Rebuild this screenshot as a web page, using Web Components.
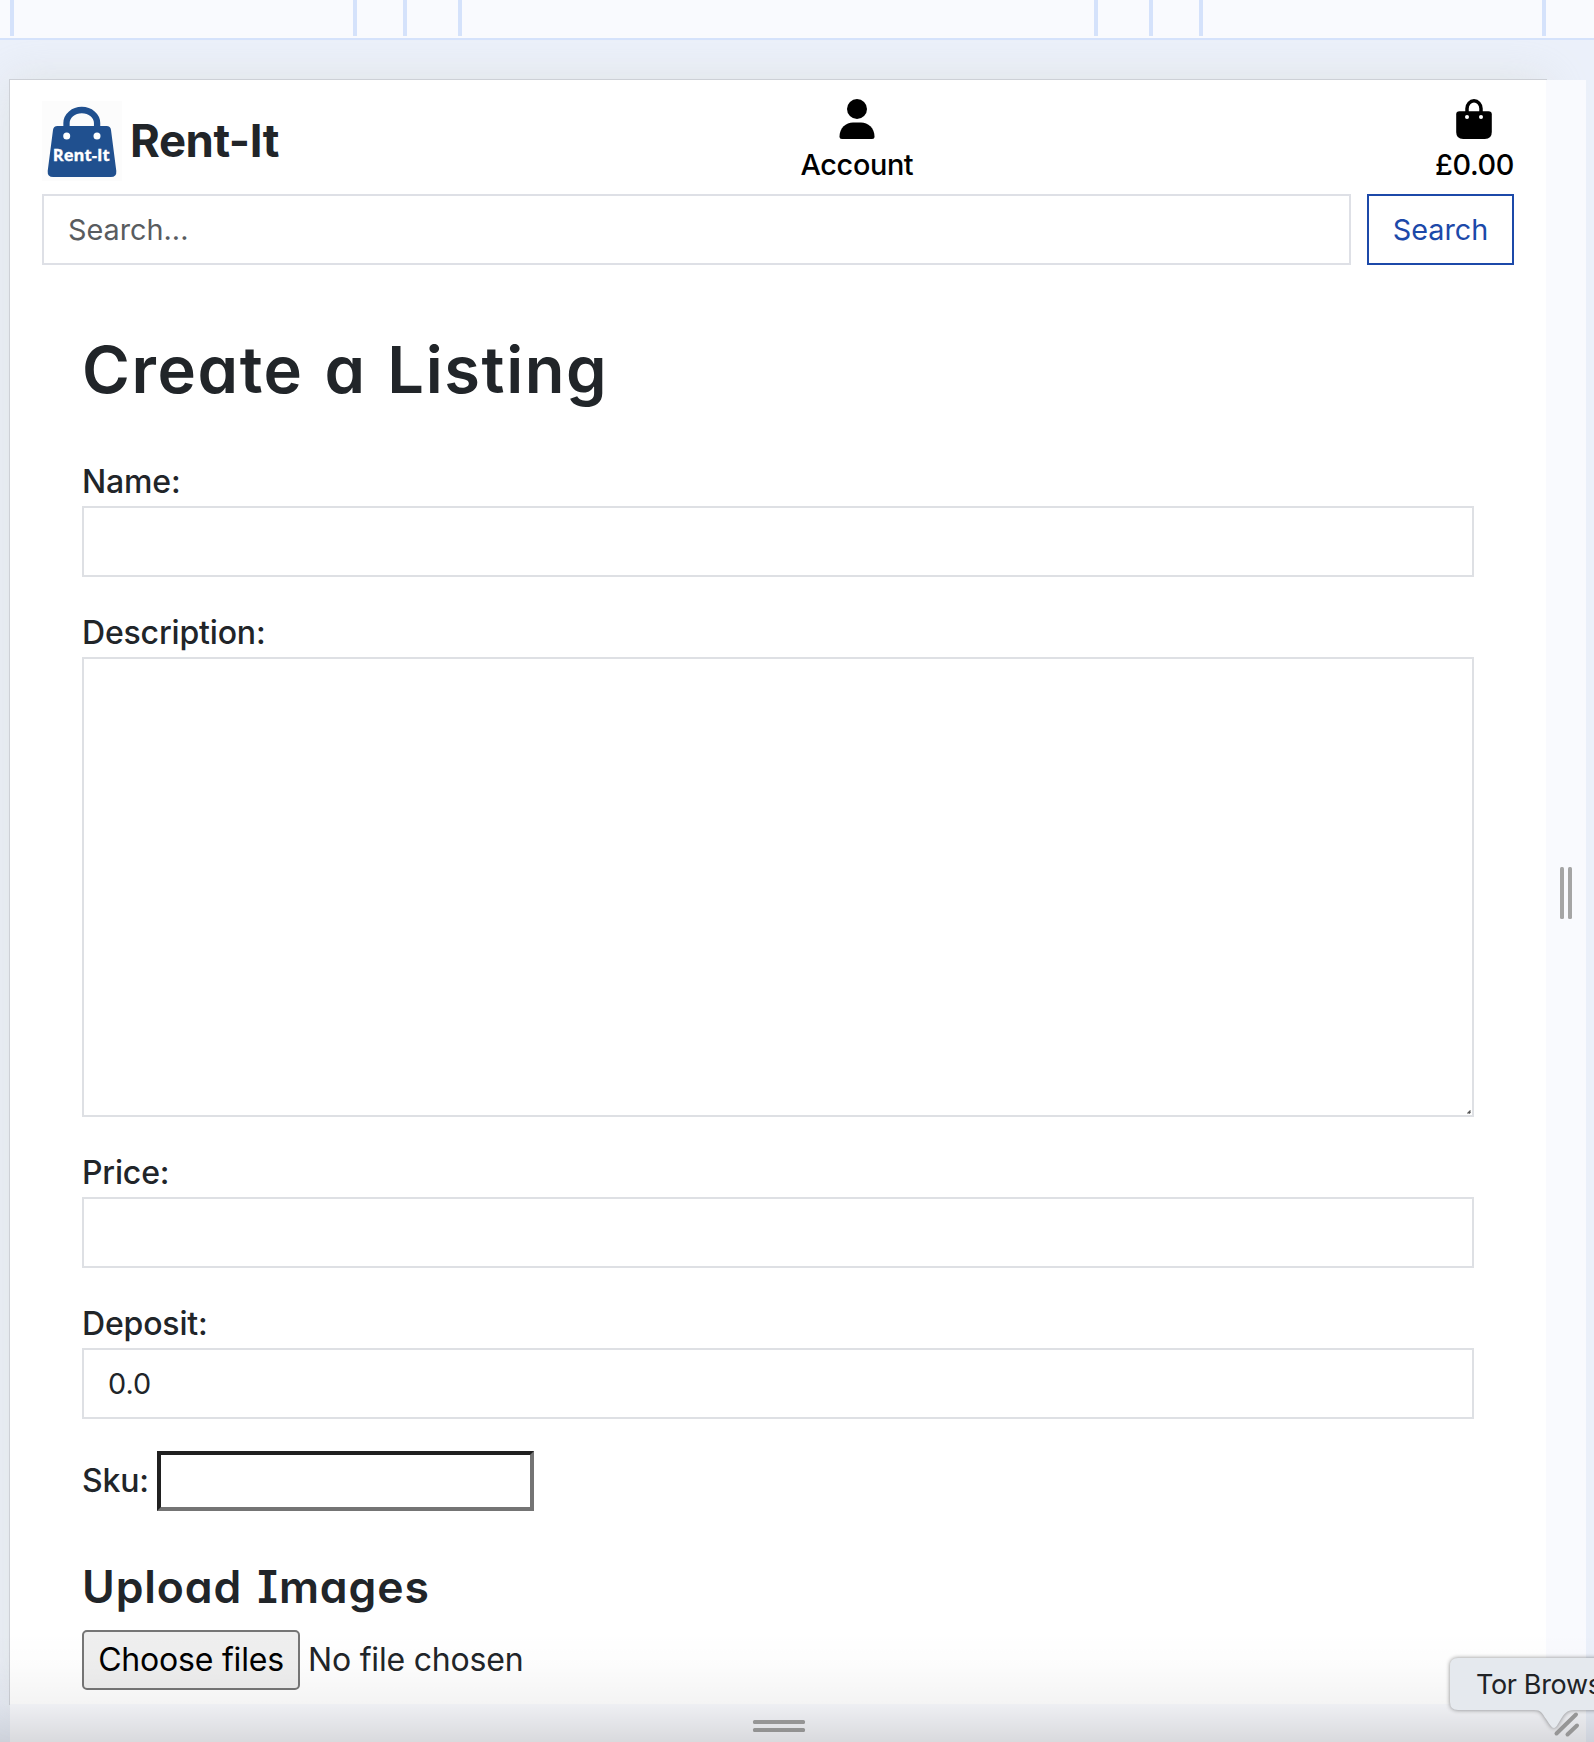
<!DOCTYPE html>
<html lang="en">
<head>
<meta charset="utf-8">
<title>Rent-It - Create a Listing</title>
<style>
html,body{margin:0;height:1742px;width:1594px;overflow:hidden;background:#ebf0fa;font-family:Inter,"Liberation Sans",sans-serif;color:#212529}
</style>
</head>
<body>
<rent-stage></rent-stage>
<script>
const define=(name,html)=>customElements.define(name,class extends HTMLElement{
  constructor(){super();this.attachShadow({mode:'open'}).innerHTML=html;}
});

define('media-ruler',`<style>
:host{display:flex;box-sizing:border-box;height:40px;padding-left:10px;background:#f9fafe;border-bottom:2px solid #d5e2fb}
i{display:block;box-sizing:border-box;height:36px;border-left:4px solid #d5e2fb;flex:none}
</style><i style="width:343px"></i><i style="width:50px"></i><i style="width:55px"></i><i style="width:636px"></i><i style="width:55px"></i><i style="width:50px"></i><i style="width:343px"></i><i style="width:4px"></i>`);

define('brand-logo',`<style>
:host{display:flex;align-items:center;height:80px}
svg{display:block;width:80px;height:80px;flex:none}
b{font-size:45.500px;font-weight:700;line-height:54px;margin-left:8px;letter-spacing:-.45px;white-space:nowrap}
text{font:700 16.500px "Open Sans","Noto Sans",sans-serif}
</style><svg viewBox="0 0 80 80"><rect width="80" height="80" fill="#fcfcfc"/>
<path d="M24.500 27V22a15.300 13 0 0 1 30.600 0v5" fill="none" stroke="#20508f" stroke-width="6.300"/>
<path d="M15.500 25h49q4 0 4.500 4l5.300 41q.5 6-5.500 6H11.200q-6 0-5.500-6L11 29q.5-4 4.500-4z" fill="#20508f"/>
<circle cx="24.700" cy="35" r="3.500" fill="#fff"/><circle cx="55" cy="35" r="3.500" fill="#fff"/>
<text x="10.800" y="59.500" textLength="57" lengthAdjust="spacingAndGlyphs" fill="#fff" stroke="#fff" stroke-width=".3">Rent-It</text></svg><b>Rent-It</b>`);

define('nav-item',`<style>
:host{display:flex;flex-direction:column;align-items:center;color:#000;font-size:28.800px;font-weight:500;line-height:44px;height:91px;white-space:nowrap;letter-spacing:-.35px}
::slotted(svg){display:block;width:40px;height:40px;margin-bottom:4px}
</style><slot name="icon"></slot><span><slot></slot></span>`);

define('site-header',`<style>
:host{display:block;padding:19px 32px 0}
.top{display:flex;justify-content:space-between;height:95px}
brand-logo{margin-top:2px}
.search{display:flex;gap:16px}
.box,.btn{box-sizing:border-box;height:71px;border:2px solid #dee0e6;font-size:28.800px;line-height:67px;white-space:nowrap}
.box{flex:1;padding-left:24px;color:#595c5f}
.btn{width:147px;border-color:#1c49a9;color:#1c49a9;text-align:center;background:#fff}
</style><div class="top"><brand-logo></brand-logo>
<nav-item class="acc"><svg slot="icon" viewBox="0 0 40 40"><circle cx="20" cy="10" r="10"/><path d="M2.500 37.500C2.500 29 9 23.500 16 23.500h8c7 0 13.500 5.500 13.500 14q0 2.500-2.500 2.500H5q-2.500 0-2.500-2.500z"/></svg>Account</nav-item>
<nav-item><svg slot="icon" viewBox="0 0 40 40"><path d="M13 15V9.500a7 7.700 0 0 1 14 0V15" fill="none" stroke="#000" stroke-width="3.500"/><path d="M5.500 12.300h29q3.300 0 3.300 3.300V33q0 7-7 7H9.200q-7 0-7-7V15.600q0-3.300 3.300-3.300z"/><circle cx="13" cy="18" r="2" fill="#fff"/><circle cx="27" cy="18" r="2" fill="#fff"/></svg>£0.00</nav-item></div>
<div class="search"><div class="box">Search...</div><div class="btn">Search</div></div>`);

define('form-field',`<style>
:host{display:block;margin-bottom:32px}
label{display:block;font-size:32px;font-weight:500;line-height:48px;letter-spacing:-.17px}
.input{position:relative;box-sizing:border-box;height:var(--field-height,71px);border:2px solid #dee0e4;padding-left:24px;font-size:28.800px;line-height:67px}
.grip{display:none;position:absolute;right:1px;bottom:1px}
:host([multiline]) .grip{display:block}
</style><label><slot name="label"></slot></label><div class="input"><slot></slot><svg class="grip" width="4" height="4" viewBox="0 0 4 4"><path d="M.5 3.500 3.500.5M2 3.500 3.500 2" stroke="#555" stroke-width="1.200"/></svg></div>`);

define('listing-form',`<style>
:host{display:block;padding:66px 72px 0}
h1,h2{margin:0;font-feature-settings:"cv11" 1,"cv08" 1;font-weight:600;white-space:nowrap}
h1{font-size:65px;line-height:78px;margin-bottom:49px;letter-spacing:1.600px;word-spacing:2.800px}
h2{font-size:44.500px;line-height:54px;margin:49px 0 16px;letter-spacing:.9px;word-spacing:3px}
.tall{--field-height:460px}
.sku{display:flex;align-items:center;font-size:32px;font-weight:500;height:60px;line-height:58px;letter-spacing:-.17px}
.sku span{width:75px}
.sku div{box-sizing:border-box;width:377px;height:60px;border:4px solid;border-color:#202020 #747474 #747474 #202020}
.files{display:flex;align-items:center;font-size:32px;line-height:56px;gap:8px;white-space:nowrap;letter-spacing:-.2px}
.files b{box-sizing:border-box;width:218px;height:60px;text-align:center;font-weight:400;color:#000;background:#efefef;border:2px solid #767676;border-radius:5px}
</style><h1>Create a Listing</h1>
<form-field><span slot="label">Name:</span></form-field>
<form-field class="tall" multiline><span slot="label">Description:</span></form-field>
<form-field><span slot="label">Price:</span></form-field>
<form-field><span slot="label">Deposit:</span>0.0</form-field>
<div class="sku"><span>Sku:</span><div></div></div>
<h2>Upload Images</h2>
<div class="files"><b>Choose files</b><span>No file chosen</span></div>`);

define('resize-handle',`<style>
:host{display:flex;align-items:center;justify-content:center;gap:4px;padding-top:2px;background:#f9fafe}
:host([horizontal]){flex-direction:column;padding:6px 0 0 2px}
i{width:4px;height:52px;border-radius:1.500px;background:#a5a5a5}
:host([horizontal]) i{width:52px;height:4px;background:#a3a3a3}
</style><i></i><i></i>`);

define('dock-tooltip',`<style>
:host{position:absolute;left:1450px;top:1657px;width:144px;height:85px;overflow:visible}
svg{position:absolute;left:-10px;top:-10px;filter:drop-shadow(0 0 2px rgba(0,0,0,.45))}
span{position:absolute;left:26px;top:10px;font-size:27px;line-height:36px;color:#202326;white-space:nowrap;letter-spacing:-.35px}
</style><svg width="174" height="95" viewBox="-10 -10 174 95"><path d="M8 1H164V53H124C117 53 114 57 111 62 108 67 106 71 104 71 102 71 100 68 96 62 92 56 91 53 84 53H8Q0 53 0 45V9Q0 1 8 1Z" fill="#e5e9ee"/></svg><span>Tor Browser</span>`);

define('rent-stage',`<style>
:host{display:block;position:relative;width:1594px;height:1742px;overflow:hidden}
.canvas{display:grid;grid-template:1624px 38px/1536px 40px;padding:40px 0 0 10px}
.page{background:#fff;box-shadow:0 0 0 1px #cdd0d6,0 0 40px rgba(200,200,185,.32);overflow:hidden}
resize-handle{position:relative;box-sizing:border-box}
.corner{background:#f9fafe}
.shade{position:absolute;left:0;right:0;top:1632px;height:110px;background:linear-gradient(rgba(0,0,0,0),rgba(0,0,0,.012) 30%,rgba(0,0,0,.045) 65%,rgba(0,0,0,.130))}
.diag{position:absolute;left:1550px;top:1706px}
</style><media-ruler></media-ruler>
<div class="canvas"><div class="page"><site-header></site-header><listing-form></listing-form></div><resize-handle></resize-handle><resize-handle horizontal></resize-handle><div class="corner"></div></div>
<div class="shade"></div>
<dock-tooltip></dock-tooltip>
<svg class="diag" width="36" height="36" viewBox="0 0 36 36"><path d="M6.500 27.500 26 8.500M17.500 28.500 27 19.500" stroke="#969696" stroke-width="4" stroke-linecap="round"/></svg>`);
</script>
</body>
</html>
